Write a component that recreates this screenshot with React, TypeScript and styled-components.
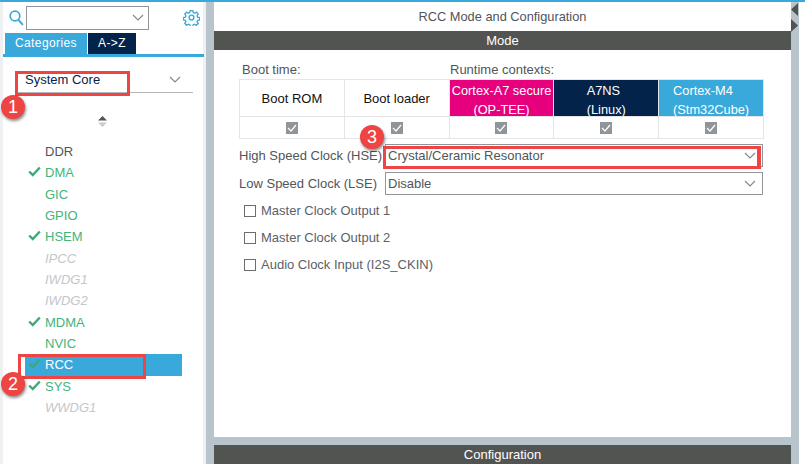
import React from "react";
import styled, { createGlobalStyle } from "styled-components";

const GlobalStyle = createGlobalStyle`
    html, body {
        margin: 0;
        padding: 0;
        background: #ffffff;
    }
    body {
        font-family: "Liberation Sans", Arial, sans-serif;
    }
`;

const BLUE = "#39a9dc";
const NAVY = "#03234b";
const PINK = "#e6007e";
const SLATE = "#b8c4cb";
const DARK = "#525452";
const RED = "#ee4444";

const Page = styled.div`
    position: relative;
    width: 805px;
    height: 464px;
    overflow: hidden;
    background: #ffffff;
    border-top: 2px solid ${BLUE};
    box-sizing: border-box;
    display: grid;
    grid-template-columns: 206px 8px 577px 8px 6px;
`;

const Sidebar = styled.aside`
    background: #ffffff;
    border-left: 3px solid #eef0f2;
    border-right: 3px solid #eef0f2;
    box-sizing: border-box;
    display: flex;
    flex-direction: column;
    margin-top: -2px;
`;

const SearchRow = styled.div`
    display: flex;
    align-items: center;
    height: 33px;
    padding: 2px 0 0 6px;
    box-sizing: border-box;
`;

const SearchBox = styled.div`
    width: 123px;
    height: 24px;
    margin-left: 2px;
    border: 1px solid #90959a;
    box-sizing: border-box;
    display: flex;
    align-items: center;
    justify-content: flex-end;
    padding-right: 4px;
`;

const GearSlot = styled.div`
    margin-left: 34px;
    display: flex;
`;

const Tabs = styled.div`
    display: flex;
    gap: 1px;
    padding-left: 2px;
    border-bottom: 3px solid ${BLUE};
    margin-right: -1px;
`;

const Tab = styled.div<{ $active?: boolean }>`
    height: 21px;
    line-height: 21px;
    width: ${(p) => (p.$active ? "82px" : "48px")};
    text-align: center;
    font-size: 12px;
    letter-spacing: 0.4px;
    color: #ffffff;
    background: ${(p) => (p.$active ? BLUE : NAVY)};
`;

const CategorySelect = styled.div`
    margin: 13px 10px 0 12px;
    height: 18px;
    border-bottom: 1px solid #b0b6ba;
    display: flex;
    align-items: center;
    justify-content: space-between;
    padding: 0 12px 4px 10px;
    font-size: 13px;
    color: ${NAVY};
`;

const SortHandle = styled.div`
    display: flex;
    justify-content: center;
    margin: 23px 0 0 -2px;
    height: 10px;
`;

const PeripheralList = styled.ul`
    list-style: none;
    margin: 15px 0 0;
    padding: 0 0 0 22px;
`;

type PeripheralState = "plain" | "ok" | "disabled";

const stateColor: Record<PeripheralState, string> = {
    plain: "#3fb57a",
    ok: "#3fb57a",
    disabled: "#c3c7cb",
};

const Peripheral = styled.li<{ $state: PeripheralState; $selected?: boolean; $first?: boolean }>`
    width: 157px;
    height: 21.33px;
    line-height: 21.33px;
    position: relative;
    padding-left: 20px;
    box-sizing: border-box;
    font-size: 13px;
    font-style: ${(p) => (p.$state === "disabled" ? "italic" : "normal")};
    color: ${(p) => (p.$selected ? "#ffffff" : p.$first ? "#50555a" : stateColor[p.$state])};
    background: ${(p) => (p.$selected ? BLUE : "transparent")};
`;

const PeripheralCheck = styled.span`
    position: absolute;
    left: 3px;
    top: 4px;
    display: flex;
`;

const Splitter = styled.div`
    background: ${SLATE};
    margin-top: -2px;
`;

const Main = styled.main`
    display: flex;
    flex-direction: column;
    background: ${SLATE};
`;

const ModePanel = styled.section`
    height: 435px;
    background: #ffffff;
    display: flex;
    flex-direction: column;
`;

const PanelTitle = styled.div`
    height: 29px;
    line-height: 29px;
    text-align: center;
    font-size: 12.8px;
    color: #50555a;
`;

const SectionBar = styled.div`
    height: 19px;
    line-height: 19px;
    text-align: center;
    font-size: 13px;
    color: #ffffff;
    background: ${DARK};
`;

const ContextLabels = styled.div`
    display: flex;
    margin: 12px 0 0 28px;
    height: 17px;
    line-height: 15px;
    font-size: 13px;
    color: #50555a;
`;

const BootLabel = styled.span`
    width: 208px;
`;

const ContextTable = styled.div`
    margin-left: 25px;
    width: 525px;
    display: grid;
    grid-template-columns: repeat(5, 1fr);
    grid-template-rows: 37px 22px;
    border-top: 1px solid #e3e6e8;
    border-left: 1px solid #e3e6e8;
    box-sizing: border-box;
`;

const HeaderCell = styled.div<{ $bg?: string; $light?: boolean; $alignLeft?: boolean; $twoLines?: boolean }>`
    display: flex;
    flex-direction: column;
    align-items: center;
    justify-content: center;
    text-align: ${(p) => (p.$alignLeft ? "left" : "center")};
    overflow: hidden;
    padding-top: ${(p) => (p.$twoLines ? "4px" : "0")};
    background: ${(p) => p.$bg || "#ffffff"};
    color: ${(p) => (p.$light ? "#ffffff" : "#111111")};
    font-size: ${(p) => (p.$light ? "12.8px" : "13px")};
    line-height: 19px;
    white-space: nowrap;
    border-right: 1px solid #e3e6e8;
    border-bottom: 1px solid #e3e6e8;
`;

const CellLines = styled.div`
    display: flex;
    flex-direction: column;
`;

const CheckCell = styled.div`
    display: flex;
    align-items: center;
    justify-content: center;
    border-right: 1px solid #e3e6e8;
    border-bottom: 1px solid #e3e6e8;
`;

const GrayCheck = styled.span`
    width: 12px;
    height: 12px;
    background: #90959a;
    display: flex;
    align-items: center;
    justify-content: center;
`;

const ClockRow = styled.div`
    display: flex;
    align-items: center;
    margin: 5px 28px 0 25px;
    height: 23px;
`;

const ClockLabel = styled.label`
    width: 146px;
    font-size: 13px;
    white-space: nowrap;
    color: #50555a;
`;

const ClockSelect = styled.div`
    flex: 1;
    height: 23px;
    border: 1px solid #90959a;
    box-sizing: border-box;
    display: flex;
    align-items: center;
    justify-content: space-between;
    padding: 0 6px 0 2px;
    font-size: 13px;
    color: #50555a;
`;

const OptionList = styled.div`
    display: flex;
    flex-direction: column;
    gap: 16px;
    margin: 10px 0 0 30px;
`;

const OptionRow = styled.label`
    display: flex;
    align-items: center;
    gap: 5px;
    height: 11px;
    font-size: 13px;
    color: #5a5f6a;
`;

const EmptyBox = styled.span`
    width: 12px;
    height: 12px;
    border: 1px solid #6a6e72;
    box-sizing: border-box;
`;

const ConfigGap = styled.div`
    height: 8px;
`;

const RightStrip = styled.div`
    background: ${SLATE};
    margin-top: -2px;
    padding-top: 3px;
    display: flex;
    flex-direction: column;
    gap: 3px;
`;

const RedBox = styled.div<{ $x: number; $y: number; $w: number; $h: number; $thickRight?: boolean }>`
    position: absolute;
    left: ${(p) => p.$x}px;
    top: ${(p) => p.$y}px;
    width: ${(p) => p.$w}px;
    height: ${(p) => p.$h}px;
    border: 3px solid ${RED};
    border-right-width: ${(p) => (p.$thickRight ? "4px" : "3px")};
    box-sizing: border-box;
`;

const Badge = styled.div<{ $x: number; $y: number }>`
    position: absolute;
    left: ${(p) => p.$x - 12}px;
    top: ${(p) => p.$y - 12}px;
    width: 24px;
    height: 24px;
    border-radius: 50%;
    background: ${RED};
    color: #ffffff;
    font-size: 18px;
    line-height: 24px;
    text-align: center;
    box-shadow: 1px 2px 3px rgba(0, 0, 0, 0.45);
`;

const Chevron: React.FC = () => (
    <svg width="12" height="7" viewBox="0 0 12 7">
        <path d="M1 1l5 5 5-5" fill="none" stroke="#80868a" strokeWidth="1.1" />
    </svg>
);

const GreenTick: React.FC = () => (
    <svg width="13" height="11" viewBox="0 0 13 11">
        <path d="M1.2 5.5l3.6 3.6 7-7.6" fill="none" stroke="#3fa878" strokeWidth="2.4" />
    </svg>
);

const SearchIcon: React.FC = () => (
    <svg width="15" height="16" viewBox="0 0 15 16">
        <circle cx="6" cy="6" r="4.8" fill="none" stroke={BLUE} strokeWidth="1.7" />
        <path d="M9.5 9.8l4.3 5" stroke={BLUE} strokeWidth="2" />
    </svg>
);

const GearIcon: React.FC = () => (
    <svg width="17" height="17" viewBox="0 0 24 24" fill="none" stroke={BLUE} strokeWidth="2">
        <circle cx="12" cy="12" r="3.4" />
        <path d="M10 2h4l.6 3 2 .9 2.6-1.7 2.8 2.8-1.7 2.6.8 2 3 .6v3.6l-3 .6-.8 2 1.7 2.6-2.8 2.8-2.6-1.7-2 .8-.6 3h-4l-.6-3-2-.8-2.6 1.7-2.8-2.8 1.7-2.6-.8-2-3-.6v-3.6l3-.6.8-2-1.7-2.6 2.8-2.8 2.6 1.7 2-.9z" transform="translate(0.6 0.4) scale(.95)" />
    </svg>
);

const SortIcon: React.FC = () => (
    <svg width="9" height="11" viewBox="0 0 9 11">
        <path d="M4.5 0L9 4.5H0z" fill="#50555a" />
        <path d="M4.5 11L0 6.5h9z" fill="#c8cccf" />
    </svg>
);

const SmallCheck: React.FC = () => (
    <svg width="10" height="8" viewBox="0 0 10 8">
        <path d="M1 4l3 3 5-6" fill="none" stroke="#ffffff" strokeWidth="1.2" />
    </svg>
);

const peripherals: { name: string; state: PeripheralState; tick?: boolean }[] = [
    { name: "DDR", state: "plain" },
    { name: "DMA", state: "ok", tick: true },
    { name: "GIC", state: "plain" },
    { name: "GPIO", state: "plain" },
    { name: "HSEM", state: "ok", tick: true },
    { name: "IPCC", state: "disabled" },
    { name: "IWDG1", state: "disabled" },
    { name: "IWDG2", state: "disabled" },
    { name: "MDMA", state: "ok", tick: true },
    { name: "NVIC", state: "plain" },
    { name: "RCC", state: "ok", tick: true },
    { name: "SYS", state: "ok", tick: true },
    { name: "WWDG1", state: "disabled" },
];

const contexts: { top: string; bottom?: string; bg?: string; light?: boolean; alignLeft?: boolean }[] = [
    { top: "Boot ROM" },
    { top: "Boot loader" },
    { top: "Cortex-A7 secure", bottom: "(OP-TEE)", bg: PINK, light: true },
    { top: "A7NS", bottom: "(Linux)", bg: NAVY, light: true, alignLeft: true },
    { top: "Cortex-M4", bottom: "(Stm32Cube)", bg: BLUE, light: true, alignLeft: true },
];

const options = ["Master Clock Output 1", "Master Clock Output 2", "Audio Clock Input (I2S_CKIN)"];

export default function App() {
    return (
        <>
            <GlobalStyle />
            <Page>
                <Sidebar>
                    <SearchRow>
                        <SearchIcon />
                        <SearchBox>
                            <Chevron />
                        </SearchBox>
                        <GearSlot>
                            <GearIcon />
                        </GearSlot>
                    </SearchRow>
                    <Tabs>
                        <Tab $active>Categories</Tab>
                        <Tab>A-&gt;Z</Tab>
                    </Tabs>
                    <CategorySelect>
                        <span>System Core</span>
                        <Chevron />
                    </CategorySelect>
                    <SortHandle>
                        <SortIcon />
                    </SortHandle>
                    <PeripheralList>
                        {peripherals.map((item, i) => (
                            <Peripheral key={item.name} $state={item.state} $first={i === 0} $selected={item.name === "RCC"}>
                                {item.tick && (
                                    <PeripheralCheck>
                                        <GreenTick />
                                    </PeripheralCheck>
                                )}
                                {item.name}
                            </Peripheral>
                        ))}
                    </PeripheralList>
                </Sidebar>
                <Splitter />
                <Main>
                    <ModePanel>
                        <PanelTitle>RCC Mode and Configuration</PanelTitle>
                        <SectionBar>Mode</SectionBar>
                        <ContextLabels>
                            <BootLabel>Boot time:</BootLabel>
                            <span>Runtime contexts:</span>
                        </ContextLabels>
                        <ContextTable>
                            {contexts.map((c) => (
                                <HeaderCell key={c.top} $bg={c.bg} $light={c.light} $alignLeft={c.alignLeft} $twoLines={!!c.bottom}>
                                    <CellLines>
                                        <span>{c.top}</span>
                                        {c.bottom && <span>{c.bottom}</span>}
                                    </CellLines>
                                </HeaderCell>
                            ))}
                            {contexts.map((c) => (
                                <CheckCell key={c.top}>
                                    <GrayCheck>
                                        <SmallCheck />
                                    </GrayCheck>
                                </CheckCell>
                            ))}
                        </ContextTable>
                        <ClockRow>
                            <ClockLabel>High Speed Clock (HSE)</ClockLabel>
                            <ClockSelect>
                                <span>Crystal/Ceramic Resonator</span>
                                <Chevron />
                            </ClockSelect>
                        </ClockRow>
                        <ClockRow>
                            <ClockLabel>Low Speed Clock (LSE)</ClockLabel>
                            <ClockSelect>
                                <span>Disable</span>
                                <Chevron />
                            </ClockSelect>
                        </ClockRow>
                        <OptionList>
                            {options.map((o) => (
                                <OptionRow key={o}>
                                    <EmptyBox />
                                    {o}
                                </OptionRow>
                            ))}
                        </OptionList>
                    </ModePanel>
                    <ConfigGap />
                    <SectionBar>Configuration</SectionBar>
                </Main>
                <RightStrip>
                    <svg width="8" height="13" viewBox="0 0 8 13">
                        <path d="M7 0v13L0 6.5z" fill={DARK} />
                    </svg>
                    <svg width="8" height="13" viewBox="0 0 8 13">
                        <path d="M0 0v13l7-6.5z" fill={DARK} />
                    </svg>
                </RightStrip>
                <div />

                <RedBox $x={15} $y={69} $w={115} $h={25} />
                <RedBox $x={18} $y={352} $w={128} $h={25} />
                <RedBox $x={383} $y={144} $w={378} $h={23} $thickRight />
                <Badge $x={13} $y={105}>1</Badge>
                <Badge $x={13} $y={382}>2</Badge>
                <Badge $x={372} $y={135}>3</Badge>
            </Page>
        </>
    );
}
